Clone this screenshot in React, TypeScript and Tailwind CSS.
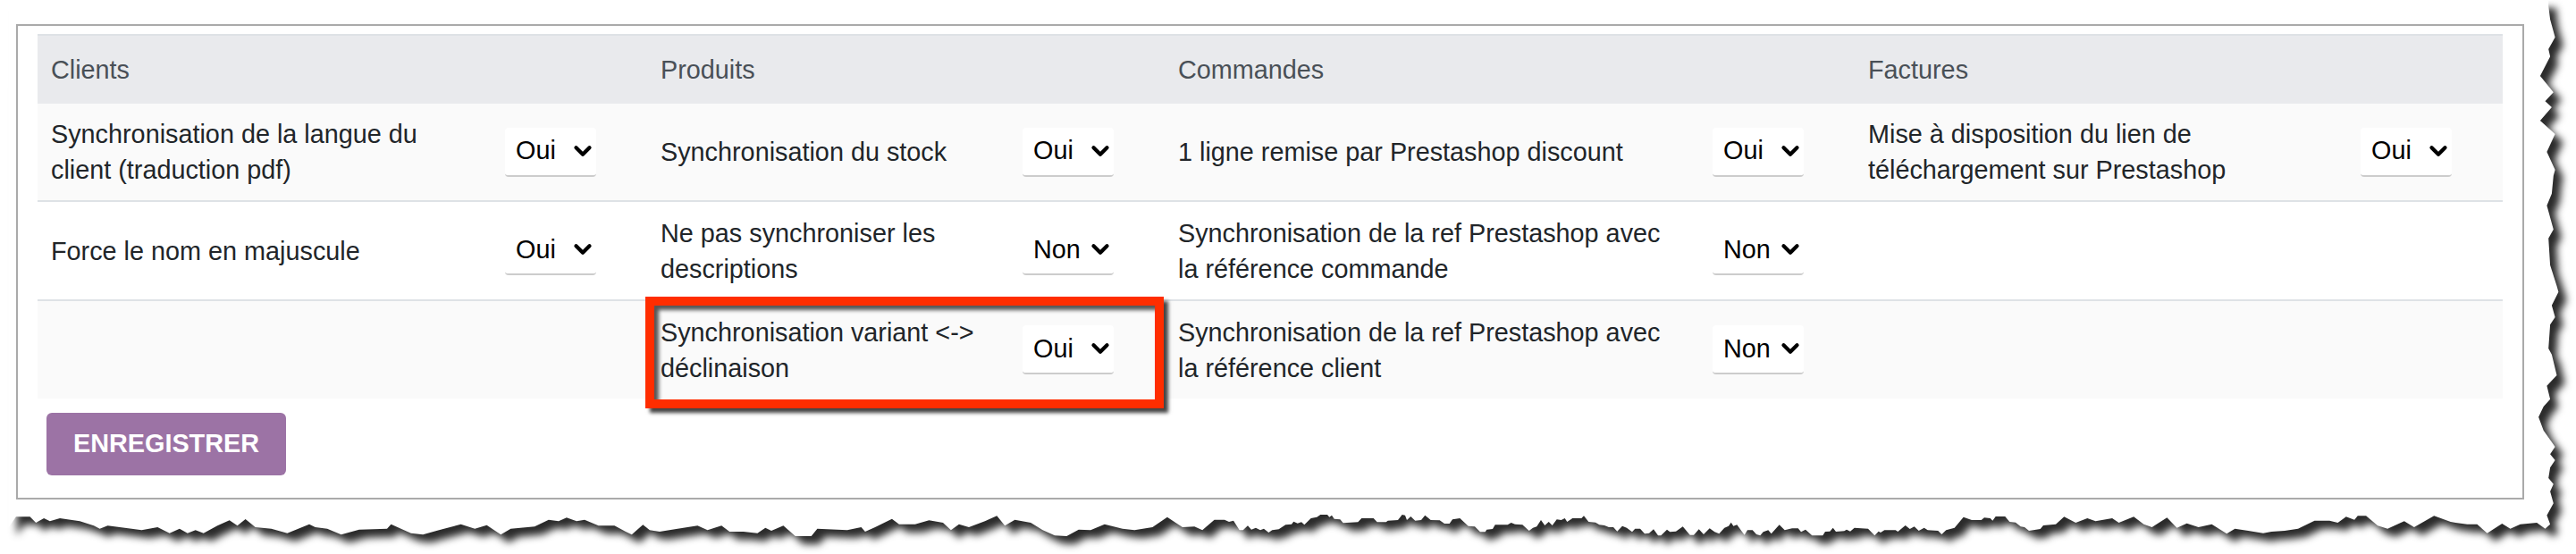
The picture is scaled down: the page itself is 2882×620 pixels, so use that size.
import { ChevronDown } from 'lucide-react';

type Pt = [number, number];

// torn paper edge, traced from the screenshot in crop coordinates
function trace(raw: number[], x0: number, sx: number, y0: number, sy: number, from: number, to: number): Pt[] {
  const pts: Pt[] = [];
  for (let i = 0; i < raw.length; i += 2) {
    const x = x0 + raw[i] / sx;
    if (x >= from && x < to) pts.push([x, y0 + raw[i + 1] / sy]);
  }
  return pts;
}

const bottomEdge: Pt[] = [
  ...trace([22,510,40,475,75,475,90,495,110,480,125,490,150,480,200,490,235,505,250,515,270,505,330,515,355,520,395,510,425,530,450,515,470,530,490,520,510,530,545,505,575,487,595,505,615,483,640,510,680,515,720,530,775,500,790,510,820,515,855,535,900,518,970,515,980,500,1030,530,1060,535,1100,520,1155,500,1190,515,1220,503,1255,535,1280,515,1340,508,1375,485,1400,490,1420,478,1445,490,1465,485,1500,505,1540,505,1568,525], 0, 2.24, 420, 3, 0, 700),
  ...trace([0,865,35,880,60,895,88,862,105,880,130,885,175,875,225,865,250,880,285,865,305,885,340,885,375,890,395,872,410,882,440,865,470,900,510,900,525,875,600,880,635,870,645,885,670,870,712,842,730,860,770,860,805,847,840,855,860,880,880,860,905,870,945,850,975,832,995,865,1020,845,1060,855,1090,880,1120,898,1150,900,1180,878,1210,880,1245,860,1290,875,1320,880,1365,870,1402,836,1440,870,1470,868,1490,880,1520,845,1568,845], 680, 2.24, 300, 3, 700, 1370),
  ...trace([0,65,15,72,30,68,50,100,62,100,78,85,90,98,105,92,120,100,132,95,148,108,160,100,182,97,205,82,225,80,232,71,245,77,258,73,268,82,290,60,310,56,322,48,345,48,352,56,360,50,368,62,388,64,398,76,448,73,460,60,500,60,512,73,542,73,548,68,582,66,596,48,606,50,612,66,625,54,640,68,660,66,673,50,692,66,722,67,738,78,755,78,765,64,790,60,818,86,840,88,858,106,875,106,880,98,900,96,908,82,950,82,962,75,975,80,1000,82,1022,102,1035,92,1048,88,1062,66,1075,84,1088,72,1100,84,1115,64,1130,66,1142,60,1150,72,1168,60,1198,60,1206,52,1222,72,1245,74,1258,82,1275,84,1290,90,1305,90,1318,104,1335,86,1350,92,1368,106,1378,95,1395,95,1410,112], 1370, 3, 560, 3, 1370, 1840),
  ...trace([0,112,15,110,30,97,45,118,55,118,75,98,85,106,105,104,128,88,152,116,165,116,182,97,198,114,218,94,235,106,250,112,268,92,282,86,290,74,298,86,310,82,335,116,345,100,362,100,375,114,388,118,398,106,415,100,425,112,452,82,470,100,495,94,515,94,525,106,540,98,562,118,598,118,606,105,622,104,632,92,642,105,670,103,678,98,690,104,704,92,750,95,772,118,785,104,792,108,805,100,842,100,850,105,875,84,890,96,905,88,920,102,938,92,950,100,985,102,997,114,1012,100,1040,92,1070,56,1098,66,1130,66,1140,58,1160,60,1168,68,1178,54,1210,54,1225,72,1245,74,1262,88,1275,90,1290,102,1328,96,1338,84], 1840, 3, 560, 3, 1840, 2300),
  ...trace([0,800,25,775,60,795,95,780,120,790,170,780,190,795,235,775,265,800,290,810,335,778,365,812,395,797,430,810,470,800,515,832,540,815,580,822,625,830,650,825,690,822,730,815,780,788,825,788,850,795,875,775,900,785,910,772,935,772,970,805,1000,815,1050,790,1080,810,1140,772,1190,792,1205,795,1240,800,1270,800,1300,830,1345,798,1370,815,1400,800,1450,795,1475,815,1490,800], 2300, 2.694, 320, 3, 2300, 2900),
];

// listed from the top of the page down
const rightEdge: Pt[] = [
  ...trace([1485,20,1490,65,1505,125,1485,165,1490,190,1460,255,1500,310,1475,340,1495,360,1460,405,1505,450,1480,510,1505,570,1500,590,1495,650,1480,690,1500,770,1485,800,1490,890,1510,960], 2300, 2.694, 0, 3, 0, 3000),
  ...trace([1515,20,1495,65,1505,105,1490,130,1485,210,1495,230,1510,300,1480,335,1490,380,1470,405,1455,440,1470,485,1505,540,1490,565,1505,585,1490,610,1485,645,1500,665,1490,690,1500,730,1480,770], 2300, 2.694, 320, 3, 0, 3000),
];

const paperPath =
  'M -40 -40 L 2851 -40 ' +
  rightEdge.map(([x, y]) => `L ${x.toFixed(1)} ${y.toFixed(1)}`).join(' ') +
  ' ' +
  [...bottomEdge].reverse().map(([x, y]) => `L ${x.toFixed(1)} ${y.toFixed(1)}`).join(' ') +
  ' L 10 -40 Z';

function YesNo({ value }: { value: string }) {
  return (
    <div className="relative w-[102px] h-[55px] shrink-0">
      <select
        defaultValue={value}
        className="appearance-none w-full h-full bg-white rounded-[4px] border-b-2 border-[#ccc] pl-[12px] text-[28.8px] text-black outline-none"
      >
        <option>Oui</option>
        <option>Non</option>
      </select>
      <ChevronDown
        size={30}
        strokeWidth={3.4}
        className="absolute right-0 top-[11px] text-black pointer-events-none"
      />
    </div>
  );
}

function Cell({ label, value, labelWidth = 'max-w-[560px]' }: { label?: string; value?: string; labelWidth?: string }) {
  return (
    <div className="flex items-center justify-between pl-[15px] pr-[57px]">
      <div className={`text-[28.8px] leading-[40px] text-[#212529] ${labelWidth}`}>{label}</div>
      {value && <YesNo value={value} />}
    </div>
  );
}

const columns = 'grid grid-cols-[682px_579px_772px_725px]';

export default function App() {
  return (
    <div
      className="relative w-[2882px] h-[620px] overflow-hidden bg-white"
      style={{ fontFamily: '"Liberation Sans", Arial, sans-serif' }}
    >
      <svg className="absolute left-0 top-0 drop-shadow-[9px_9px_4px_#2a2a2a]" width="2882" height="620">
        <path d={paperPath} fill="#fff" />
      </svg>

      <div className="relative ml-[18px] mt-[27px] w-[2806px] h-[532px] border-2 border-[#aaa] px-[22px] pt-[9px]">
        <div className={`${columns} h-[78px] items-center bg-[#e9eaed] border-t-2 border-[#dee2e6] text-[28.8px] text-[#495057] pt-[2px]`}>
          <div className="pl-[15px]">Clients</div>
          <div className="pl-[15px]">Produits</div>
          <div className="pl-[15px]">Commandes</div>
          <div className="pl-[15px]">Factures</div>
        </div>

        <div className={`${columns} h-[110px] bg-[#fafafa] border-b-2 border-[#dee2e6]`}>
          <Cell label="Synchronisation de la langue du client (traduction pdf)" value="Oui" labelWidth="max-w-[470px]" />
          <Cell label="Synchronisation du stock" value="Oui" />
          <Cell label="1 ligne remise par Prestashop discount" value="Oui" />
          <Cell label="Mise à disposition du lien de téléchargement sur Prestashop" value="Oui" />
        </div>

        <div className={`${columns} h-[111px] bg-white border-b-2 border-[#dee2e6]`}>
          <Cell label="Force le nom en majuscule" value="Oui" />
          <Cell label="Ne pas synchroniser les descriptions" value="Non" />
          <Cell label="Synchronisation de la ref Prestashop avec la référence commande" value="Non" />
          <Cell />
        </div>

        <div className={`${columns} h-[109px] bg-[#fafafa]`}>
          <Cell />
          <Cell label="Synchronisation variant <-> déclinaison" value="Oui" />
          <Cell label="Synchronisation de la ref Prestashop avec la référence client" value="Non" />
          <Cell />
        </div>

        <button className="mt-[16px] ml-[10px] w-[268px] h-[70px] rounded-[6px] bg-[#9c73a5] text-white font-bold text-[28.8px]">
          ENREGISTRER
        </button>

        {/* annotation drawn over the screenshot */}
        <div className="absolute left-[702px] top-[303px] w-[580px] h-[125px] border-[10px] border-[#ff2d00] shadow-[5px_5px_4px_#444,inset_5px_5px_4px_#555] pointer-events-none" />
      </div>
    </div>
  );
}
